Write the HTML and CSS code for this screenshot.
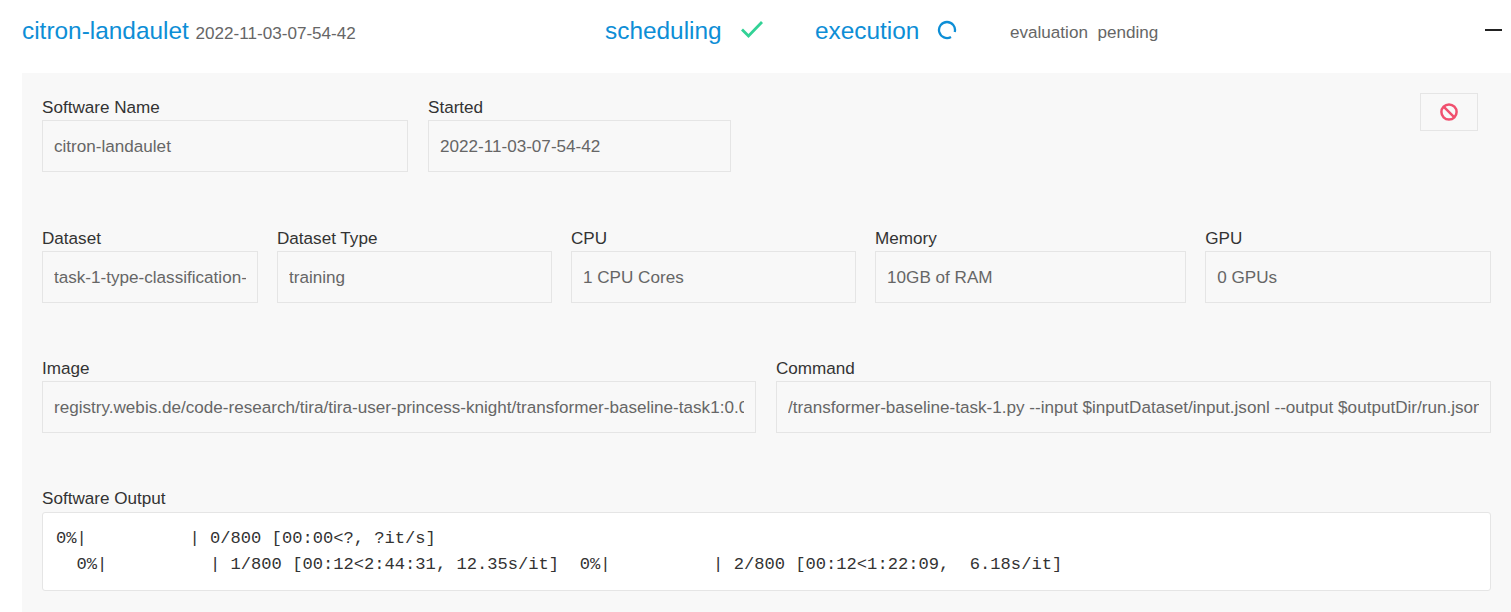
FILE: index.html
```html
<!DOCTYPE html>
<html lang="en">
<head>
<meta charset="utf-8">
<title>citron-landaulet</title>
<link rel="stylesheet" href="styles.css">
</head>
<body>
<header class="head">
  <div class="title"><span class="name">citron-landaulet</span> <span class="stamp">2022-11-03-07-54-42</span></div>
  <div class="stage stage-sched"><span class="stage-name">scheduling</span>
    <svg class="check" width="24" height="18" viewBox="0 0 24 18"><path d="M2 9.5 L8.5 16 L22 2" fill="none" stroke="#32d296" stroke-width="2.8"/></svg>
  </div>
  <div class="stage stage-exec"><span class="stage-name">execution</span>
    <svg class="spin" width="20" height="20" viewBox="0 0 20 20"><path d="M17.73 12.07 A8 8 0 1 0 14 16.93" fill="none" stroke="#0d8ed6" stroke-width="2.3"/></svg>
  </div>
  <div class="pending"><span>evaluation</span><span>pending</span></div>
  <div class="dash"></div>
</header>
<main class="panel">
  <div class="row row-a">
    <div class="field f-name"><label>Software Name</label><div class="box"><div class="val">citron-landaulet</div></div></div>
    <div class="field f-started"><label>Started</label><div class="box"><div class="val">2022-11-03-07-54-42</div></div></div>
    <button class="stop" type="button" aria-label="Stop">
      <svg width="20" height="20" viewBox="0 0 20 20"><circle cx="10" cy="10" r="7.6" fill="none" stroke="#f0506e" stroke-width="2.5"/><path d="M4.6 4.6 L15.4 15.4" stroke="#f0506e" stroke-width="2.5"/></svg>
    </button>
  </div>
  <div class="row row-b">
    <div class="field f-ds"><label>Dataset</label><div class="box"><div class="val">task-1-type-classification-task-1</div></div></div>
    <div class="field f-type"><label>Dataset Type</label><div class="box"><div class="val">training</div></div></div>
    <div class="field f-cpu"><label>CPU</label><div class="box"><div class="val">1 CPU Cores</div></div></div>
    <div class="field f-mem"><label>Memory</label><div class="box"><div class="val">10GB of RAM</div></div></div>
    <div class="field f-gpu"><label>GPU</label><div class="box"><div class="val">0 GPUs</div></div></div>
  </div>
  <div class="row row-c">
    <div class="field f-image"><label>Image</label><div class="box"><div class="val">registry.webis.de/code-research/tira/tira-user-princess-knight/transformer-baseline-task1:0.0.1</div></div></div>
    <div class="field f-command"><label>Command</label><div class="box"><div class="val">/transformer-baseline-task-1.py --input $inputDataset/input.jsonl --output $outputDir/run.jsonl</div></div></div>
  </div>
  <div class="output">
    <label>Software Output</label>
    <pre class="log">0%|          | 0/800 [00:00&lt;?, ?it/s]
  0%|          | 1/800 [00:12&lt;2:44:31, 12.35s/it]  0%|          | 2/800 [00:12&lt;1:22:09,  6.18s/it]</pre>
  </div>
</main>
</body>
</html>
```
FILE: styles.css
```css
* { box-sizing: border-box; }
html, body { margin: 0; height: 612px; overflow: hidden; background: #fff; }
body { font-family: "Liberation Sans", Arial, sans-serif; font-size: 17.1px; color: #666; }

.head { height: 73px; padding-left: 22px; display: flex; align-items: flex-start; position: relative; }
.title { width: 583px; padding-top: 16px; line-height: 30px; white-space: nowrap; }
.name { font-size: 24.4px; color: #0d8ed6; }
.stamp { font-size: 17.1px; color: #666; margin-left: 2px; }
.stage { display: flex; align-items: flex-start; padding-top: 16px; line-height: 30px; }
.stage-name { font-size: 24.4px; color: #0d8ed6; }
.stage-sched { width: 210px; }
.stage-exec { width: 195px; }
.check { margin: 4px 0 0 18px; }
.spin { margin: 4px 0 0 18px; }
.pending { display: flex; gap: 9.6px; padding-top: 23px; line-height: 20px; }
.dash { position: absolute; left: 1485px; top: 29px; width: 17px; height: 2px; background: #222; }

.panel { margin-left: 22px; height: 539px; background: #f8f8f8; padding: 20px 20px 0; }
.row { display: flex; }
.row-a { height: 131px; gap: 20px; }
.row-b { height: 130px; gap: 19.5px; }
.row-c { height: 130px; gap: 20px; }

.field, .output { padding-top: 5px; }
.field { flex: none; }
.field label, .output label { display: block; line-height: 20px; color: #333; }
.box { height: 52px; margin-top: 2px; padding: 1px 11px 0; border: 1px solid #e5e5e5; line-height: 50px; color: #666; }
.val { overflow: hidden; white-space: nowrap; }

.f-name { width: 366px; }
.f-started { width: 303px; }
.stop { flex: none; width: 58px; height: 38px; margin-left: auto; margin-right: 13px; padding: 0; display: flex; align-items: center; justify-content: center; background: transparent; border: 1px solid #e5e5e5; }
.f-ds { width: 215.5px; }
.f-type { width: 274.5px; }
.f-cpu { width: 284.6px; }
.f-mem { width: 310.6px; }
.f-gpu { width: 285.8px; }
.f-image { width: 714px; }
.f-command { width: 715px; }

.log { margin: 3px 0 0; height: 79px; padding: 13px 13px 0; background: #fff; border: 1px solid #e5e5e5; border-radius: 3px; font-family: "Liberation Mono", "Courier New", monospace; font-size: 17.13px; line-height: 26px; color: #333; white-space: pre; overflow: hidden; }
```
